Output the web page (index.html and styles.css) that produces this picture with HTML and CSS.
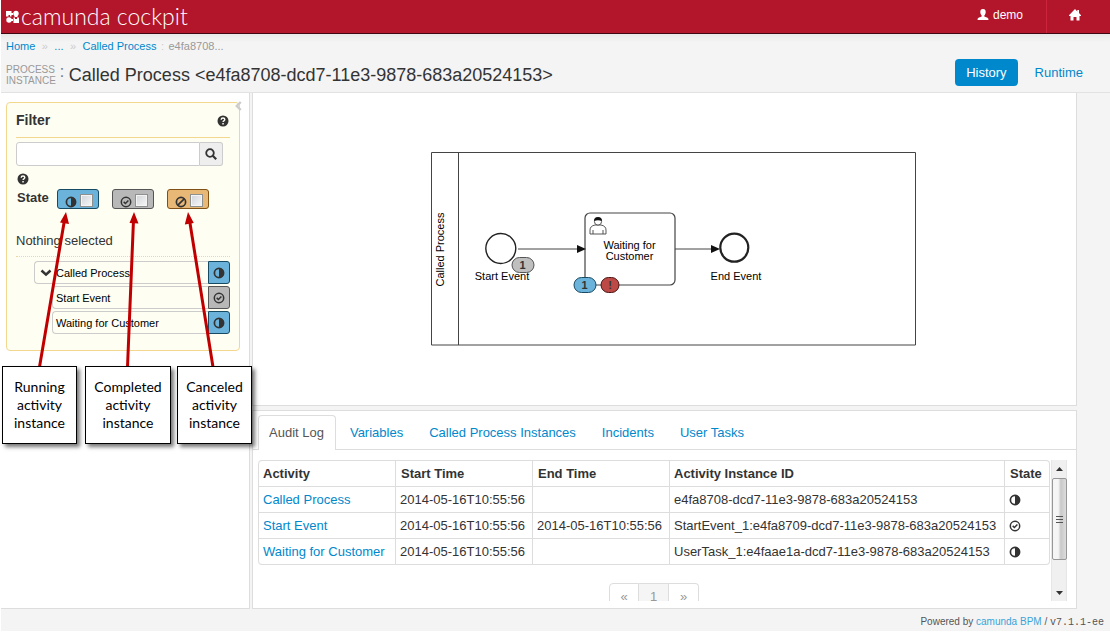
FILE: index.html
```html
<!DOCTYPE html>
<html lang="en">
<head>
<meta charset="utf-8">
<title>camunda cockpit</title>
<link rel="stylesheet" href="styles.css">
</head>
<body>
<svg class="defs" aria-hidden="true">
  <symbol id="half" viewBox="0 0 12 12"><circle cx="6" cy="6" r="4.6" fill="none" stroke="#333" stroke-width="1.7"/><path d="M6 1a5 5 0 0 1 0 10z" fill="#333"/></symbol>
  <symbol id="done" viewBox="0 0 12 12"><circle cx="6" cy="6" r="4.7" fill="none" stroke="#333" stroke-width="1.5"/><path d="M3.7 5.9l1.7 1.6 3-3" fill="none" stroke="#333" stroke-width="1.5"/></symbol>
  <symbol id="ban" viewBox="0 0 12 12"><circle cx="6" cy="6" r="4.6" fill="none" stroke="#333" stroke-width="1.7"/><path d="M2.8 9.2l6.4-6.4" stroke="#333" stroke-width="1.7"/></symbol>
  <symbol id="help" viewBox="0 0 12 12"><circle cx="6" cy="6" r="5.5" fill="#333"/><path d="M4.2 4.7q0-1.7 1.8-1.7t1.8 1.5q0 .8-.9 1.3-.8.5-.8 1.2" fill="none" stroke="#fffef2" stroke-width="1.4"/><path d="M5.3 8h1.5v1.4H5.3z" fill="#fffef2"/></symbol>
</svg>

<header class="topbar">
  <a class="brand" href="#">
    <svg width="13" height="13" viewBox="0 0 13 13" fill="#fff" aria-hidden="true"><path d="M0 1h5.500v2H7v2H5.500v1.500H4V5H2.500v1.500H0z"/><circle cx="10" cy="3.500" r="2.700"/><path d="M8.500 5h3v2h-3z"/><circle cx="3" cy="10" r="2.700"/><path d="M4.500 9H7v2H4.500zM7.500 7.500H9V9h2V7.500h2V13H7.500z"/></svg>
    <span>camunda cockpit</span>
  </a>
  <nav class="topnav">
    <a class="user" href="#"><svg width="12" height="12" viewBox="0 0 12 12" fill="#fff" aria-hidden="true"><path d="M6 0c2 0 2.700 1.300 2.700 3S8 5.800 7.300 6.500v1l3.200 1.300q1 .5 1 2.200H.5q0-1.700 1-2.200l3.200-1.300v-1C4 5.800 3.300 4.700 3.300 3S4 0 6 0z"/></svg>demo</a>
    <a class="home" href="#" aria-label="Home"><svg width="12" height="12" viewBox="0 0 12 12" fill="#fff" aria-hidden="true"><path d="M6 0l2.300 2.400V1H10v3L12 6.200V7h-1.500v4.500h-3V8h-3v3.500h-3V7H0v-.8z"/></svg></a>
  </nav>
</header>

<div class="pagehead">
  <nav class="crumbs"><a href="#">Home</a><i class="c1">»</i><a href="#">...</a><i class="c2">»</i><a href="#">Called Process</a><i class="c3">:</i><span>e4fa8708...</span></nav>
  <div class="titlerow">
    <div class="kind">PROCESS<br>INSTANCE</div>
    <span class="colon">:</span>
    <h1>Called Process &lt;e4fa8708-dcd7-11e3-9878-683a20524153&gt;</h1>
    <div class="modes"><a class="mode active" href="#">History</a><a class="mode" href="#">Runtime</a></div>
  </div>
</div>

<main class="work">
  <aside class="side">
    <section class="filter">
      <div class="filterhead"><h2>Filter</h2><svg class="ico" aria-hidden="true"><use href="#help"/></svg></div>
      <div class="search"><input type="text" aria-label="Filter instances"><button type="button" aria-label="Search"><svg width="12" height="12" viewBox="0 0 12 12" fill="none" stroke="#333" aria-hidden="true"><circle cx="5" cy="5" r="3.800" stroke-width="1.800"/><path d="M7.800 7.800l3.400 3.400" stroke-width="2.200"/></svg></button></div>
      <svg class="ico hint" aria-hidden="true"><use href="#help"/></svg>
      <div class="states">
        <strong>State</strong>
        <label class="state blue"><svg class="ico" aria-hidden="true"><use href="#half"/></svg><input type="checkbox" aria-label="Running"></label>
        <label class="state grey"><svg class="ico" aria-hidden="true"><use href="#done"/></svg><input type="checkbox" aria-label="Completed"></label>
        <label class="state orange"><svg class="ico" aria-hidden="true"><use href="#ban"/></svg><input type="checkbox" aria-label="Canceled"></label>
      </div>
      <p class="selection">Nothing selected</p>
      <ul class="tree">
        <li class="node root"><button class="name" type="button"><svg width="12" height="8" viewBox="0 0 12 8" fill="none" stroke="#333" stroke-width="2.600" aria-hidden="true"><path d="M1.500 1.500L6 5.600l4.500-4.100"/></svg>Called Process</button><span class="mark blue"><svg class="ico" aria-hidden="true"><use href="#half"/></svg></span></li>
        <li class="node"><button class="name" type="button">Start Event</button><span class="mark grey"><svg class="ico" aria-hidden="true"><use href="#done"/></svg></span></li>
        <li class="node"><button class="name" type="button">Waiting for Customer</button><span class="mark blue"><svg class="ico" aria-hidden="true"><use href="#half"/></svg></span></li>
      </ul>
    </section>
    <button class="collapse" type="button" aria-label="Collapse"><svg width="7" height="10" viewBox="0 0 7 10" fill="none" stroke="#ccc" stroke-width="2.400" aria-hidden="true"><path d="M5.800 1L1.800 5l4 4"/></svg></button>
  </aside>

  <div class="content">
    <section class="diagram">
      <svg width="486" height="194" viewBox="431 152 486 194" aria-label="Called Process diagram">
        <g fill="#fff" stroke="#444">
          <path d="M431.500 152.500h484v192.500h-484zM458.500 152.500v192.500"/>
          <circle cx="500.800" cy="248.500" r="15" stroke="#222" stroke-width="1.400"/>
          <rect x="585" y="213" width="90" height="72" rx="5" stroke-width="1.200"/>
          <circle cx="734.300" cy="247.700" r="14" stroke="#222" stroke-width="2.200"/>
          <path d="M518 249h60M675 249h37"/>
          <path d="M590 234v-4q0-4 5-5h6q5 1 5 5v4zM593 230v4M603 230v4" stroke-width=".9"/>
          <circle cx="598" cy="221.500" r="3.600" stroke-width=".9"/>
        </g>
        <path d="M577 245l9 4-9 4zM711 245l9 4-9 4zM594 221q0-4 4-4t4 4q-4-1.500-8 0z" fill="#111"/>
        <g class="dtext" text-anchor="middle">
          <text x="502" y="280">Start Event</text>
          <text x="629.500" y="249">Waiting for</text>
          <text x="629.500" y="260">Customer</text>
          <text x="736" y="280">End Event</text>
          <text transform="translate(444 249.500) rotate(-90)">Called Process</text>
        </g>
        <g class="dbadge" text-anchor="middle">
          <rect x="512" y="257.500" width="22" height="15" rx="7.500" fill="#b8b8b8" fill-opacity=".9" stroke="#555"/>
          <rect x="574" y="277.500" width="22" height="15" rx="7.500" fill="#6bb3da" stroke="#174a63"/>
          <rect x="601" y="277.500" width="18" height="15" rx="7.500" fill="#bd4946" stroke="#4a1413"/>
          <text x="522.500" y="269">1</text><text x="584.500" y="289">1</text><text x="610" y="289">!</text>
        </g>
      </svg>
    </section>

    <section class="details">
      <nav class="tabs"><a class="tab active" href="#">Audit Log</a><a class="tab" href="#">Variables</a><a class="tab" href="#">Called Process Instances</a><a class="tab" href="#">Incidents</a><a class="tab" href="#">User Tasks</a></nav>
      <div class="scroller">
        <div class="scrolled">
          <table>
            <colgroup><col class="w1"><col class="w1"><col class="w1"><col><col class="w2"></colgroup>
            <thead><tr><th>Activity</th><th>Start Time</th><th>End Time</th><th>Activity Instance ID</th><th>State</th></tr></thead>
            <tbody>
              <tr><td><a href="#">Called Process</a></td><td>2014-05-16T10:55:56</td><td></td><td>e4fa8708-dcd7-11e3-9878-683a20524153</td><td><svg class="ico" aria-label="Running"><use href="#half"/></svg></td></tr>
              <tr><td><a href="#">Start Event</a></td><td>2014-05-16T10:55:56</td><td>2014-05-16T10:55:56</td><td>StartEvent_1:e4fa8709-dcd7-11e3-9878-683a20524153</td><td><svg class="ico" aria-label="Completed"><use href="#done"/></svg></td></tr>
              <tr><td><a href="#">Waiting for Customer</a></td><td>2014-05-16T10:55:56</td><td></td><td>UserTask_1:e4faae1a-dcd7-11e3-9878-683a20524153</td><td><svg class="ico" aria-label="Running"><use href="#half"/></svg></td></tr>
            </tbody>
          </table>
          <nav class="pager"><a href="#">«</a><a class="current" href="#">1</a><a href="#">»</a></nav>
        </div>
        <div class="scrollbar" aria-hidden="true">
          <svg width="7" height="4" viewBox="0 0 7 4"><path d="M0 4l3.500-4L7 4z" fill="#333"/></svg>
          <div class="thumb"><b></b><b></b><b></b></div>
          <svg width="7" height="4" viewBox="0 0 7 4"><path d="M0 0h7L3.500 4z" fill="#333"/></svg>
        </div>
      </div>
    </section>
  </div>
</main>

<footer class="foot">Powered by <a href="#">camunda BPM</a> / <code>v7.1.1-ee</code></footer>

<div class="notes">
  <svg class="arrows" width="252" height="160" viewBox="0 210 252 160" aria-hidden="true">
    <path d="M39.500 367L64.500 220M127.500 367L133.500 220M213 367L189.500 220" stroke="#c00000" stroke-width="3" fill="none"/>
    <path d="M66 212l3 12-9-1.500zM134 212l4.500 11.500-9-.400zM188 212l5.800 11-9 1.500z" fill="#c00000"/>
  </svg>
  <div class="note n1">Running activity instance</div>
  <div class="note n2">Completed activity instance</div>
  <div class="note n3">Canceled activity instance</div>
</div>
</body>
</html>
```

FILE: styles.css
```css
* { box-sizing: border-box; }
body {
  margin: 0;
  padding-left: 1px;
  min-height: 100vh;
  display: flex;
  flex-direction: column;
  position: relative;
  background: linear-gradient(90deg, #fff 1px, #f4f4f4 1px);
  border-bottom: 2px solid #fff;
  color: #333;
  font: 13px/18px "Liberation Sans", Arial, sans-serif;
}
a { color: #0088cc; text-decoration: none; }
svg { display: block; flex: none; }
button { font: inherit; color: inherit; padding: 0; margin: 0; }
.defs { position: absolute; width: 0; height: 0; }
.ico { width: 12px; height: 12px; }

.topbar {
  display: flex;
  justify-content: space-between;
  height: 34px;
  background: #b3152a;
  border-bottom: 1px solid #3d0610;
}
.brand {
  display: flex;
  align-items: flex-start;
  gap: 2px;
  padding-left: 5px;
  color: #fff;
  font: 300 23px/32px Lato, sans-serif;
}
.brand svg { margin-top: 10px; }
.topnav { display: flex; line-height: 30px; font-size: 12px; }
.topnav a { display: flex; align-items: center; color: #fff; }
.user { gap: 4px; padding: 0 23px 3px 0; }
.home { padding: 0 29px 3px 22px; border-left: 1px solid #c92439; }

.pagehead {
  height: 59px;
  padding: 4px 16px 0 5px;
  border-bottom: 1px solid #e2e2e2;
  background: linear-gradient(#e8e8e8, #f4f4f4 8px);
}
.crumbs { display: flex; font-size: 11px; line-height: 17px; color: #999; }
.crumbs i { font-style: normal; color: #ccc; text-align: center; }
.c1 { width: 19px; }
.c2 { width: 19px; }
.c3 { width: 12px; }
.titlerow { display: flex; align-items: center; height: 34px; }
.kind { font-size: 10px; line-height: 11px; color: #999; padding-top: 6px; }
.colon { width: 13px; padding-left: 4px; font-size: 16px; color: #777; }
h1 { margin: 0; font-size: 18px; line-height: 24px; font-weight: 400; padding-top: 5px; }
.modes { display: flex; gap: 6px; margin-left: auto; }
.mode { padding: 0 11px; line-height: 27px; border-radius: 4px; }
.mode.active { background: #0088cc; color: #fff; }

.work { flex: 1; display: flex; gap: 2px; padding-right: 33px; }
.side {
  width: 249px;
  position: relative;
  padding: 9px 9px 0 5px;
  background: #fff;
  border-right: 1px solid #ddd;
  border-bottom: 1px solid #ddd;
}
.filter {
  background: #fffef2;
  border: 1px solid #f3d78f;
  border-radius: 4px;
  padding: 8px 9px 16px;
}
.filterhead {
  display: flex;
  justify-content: space-between;
  align-items: center;
  height: 27px;
  padding-bottom: 8px;
  border-bottom: 1px solid #f3d78f;
}
.filterhead .ico { margin-right: 1px; margin-top: 2px; }
h2 { margin: 0; font-size: 14px; line-height: 18px; }
.search { display: flex; margin: 4px 7px 7px 0; height: 24px; }
.search input { flex: 1; min-width: 0; border: 1px solid #ccc; border-radius: 3px 0 0 3px; background: #fff; }
.search button {
  width: 23px;
  display: grid;
  place-items: center;
  border: 1px solid #ccc;
  border-left: 0;
  border-radius: 0 3px 3px 0;
  background: #eee;
}
.hint { margin-left: 1px; }
.states { display: flex; height: 20px; margin-top: 4px; padding-left: 1px; gap: 13px; }
.states strong { line-height: 18px; margin-right: -5px; }
.state { display: flex; align-items: flex-end; gap: 3px; padding: 0 5px 0 7px; border: 1px solid; border-radius: 3px; }
.state input {
  appearance: none;
  width: 13px;
  height: 13px;
  margin: 0 0 1px;
  border: 1px solid #8e8f8f;
  background: linear-gradient(135deg, #cfd3d8, #f8f8f8);
  box-shadow: inset 0 0 0 1px #f4f4f4;
}
.blue { background: #6bb3da; border-color: #174a63; }
.grey { background: #b8b8b8; border-color: #555; }
.orange { background: #e8b877; border-color: #805014; }
.selection { margin: 23px 0 4px; padding-bottom: 6px; border-bottom: 1px dotted #f0d6a0; }
.tree { list-style: none; margin: 0; padding: 0 0 0 36px; display: grid; gap: 2px; font-size: 11px; color: #000; }
.node { display: flex; height: 23px; }
.root { margin-left: -18px; }
.name {
  flex: 1;
  display: flex;
  align-items: center;
  gap: 4px;
  padding-left: 3px;
  background: none;
  border: 1px solid #ccc;
  border-right: 0;
  border-radius: 4px 0 0 4px;
}
.root .name { padding-left: 5px; }
.mark { width: 22px; display: grid; place-items: center; border: 1px solid; border-radius: 0 3px 3px 0; }
.mark.blue { border-color: #174a63; }
.mark.grey { border-color: #555; }
.collapse { position: absolute; right: 7px; top: 8px; border: 0; background: none; }

.content { flex: 1; min-width: 0; display: flex; flex-direction: column; gap: 4px; }
.diagram, .details { background: #fff; border: 1px solid #ddd; }
.diagram { flex: 1; border-top: 0; display: flex; align-items: center; justify-content: center; padding-left: 18px; }
.dtext { font-size: 11px; fill: #000; }
.dbadge { font-size: 11px; font-weight: 700; fill: #333; }
.details { height: 199px; }
.tabs { display: flex; gap: 2px; height: 39px; padding: 4px 5px 0; border-bottom: 1px solid #ddd; }
.tab { height: 35px; padding: 0 11px; line-height: 33px; border: 1px solid transparent; border-radius: 4px 4px 0 0; }
.tab.active { color: #555; background: #fff; border-color: #ddd; border-bottom: 0; padding: 0 11px 0 10px; }
.scroller { display: flex; height: 141px; margin-top: 10px; padding: 0 9px 0 5px; overflow: hidden; }
.scrolled { flex: 1; min-width: 0; }
table {
  width: 100%;
  table-layout: fixed;
  border-collapse: separate;
  border-spacing: 0;
  border: 1px solid #ddd;
  border-left: 0;
  border-radius: 4px;
}
.w1 { width: 137px; }
.w2 { width: 45px; }
th, td { height: 26px; padding: 0 4px; text-align: left; border-left: 1px solid #ddd; white-space: nowrap; }
th:first-child { border-top-left-radius: 4px; }
tr:last-child td:first-child { border-bottom-left-radius: 4px; }
th { height: 25px; padding: 0 5px; }
th:first-child, th:nth-child(4) { padding: 0 4px; }
td { border-top: 1px solid #ddd; }
.pager { display: flex; justify-content: center; margin-top: 18px; }
.pager a { width: 30px; height: 28px; line-height: 26px; text-align: center; color: #999; border: 1px solid #ddd; border-left: 0; }
.pager a:first-child { border-left: 1px solid #ddd; border-radius: 4px 0 0 4px; }
.pager a:last-child { border-radius: 0 4px 4px 0; }
.pager .current { background: #f5f5f5; }
.scrollbar {
  width: 16px;
  margin-left: 1px;
  padding: 7px 0 6px;
  display: flex;
  flex-direction: column;
  align-items: center;
  background: #f0f0f0;
  border: 1px solid #e6e6e6;
  border-width: 0 1px;
}
.scrollbar > svg:last-child { margin-top: auto; }
.thumb {
  width: 15px;
  height: 82px;
  margin-top: 7px;
  display: flex;
  flex-direction: column;
  align-items: center;
  justify-content: center;
  gap: 2px;
  border: 1px solid #979797;
  border-radius: 2px;
  background: linear-gradient(90deg, #f5f5f5 40%, #c9c9cb 60%, #dcdcdc);
}
.thumb b { width: 7px; height: 1px; background: #555; }

.foot { height: 22px; padding: 4px 6px 0 0; text-align: right; font-size: 10px; color: #555; }
.foot a { color: #3ba3d8; }
.foot code { font: 10px "Liberation Mono", monospace; }

.notes { position: absolute; left: 0; top: 0; }
.arrows { position: absolute; left: 0; top: 210px; }
.note {
  position: absolute;
  top: 366px;
  width: 75px;
  height: 78px;
  padding: 11px 8px 0;
  background: #fff;
  border: 1px solid #000;
  box-shadow: 3px 3px 4px #0008;
  color: #000;
  text-align: center;
  font: 14px/18px Lato, sans-serif;
}
.n1 { left: 2px; }
.n2 { left: 85px; width: 86px; }
.n3 { left: 177px; }
```
